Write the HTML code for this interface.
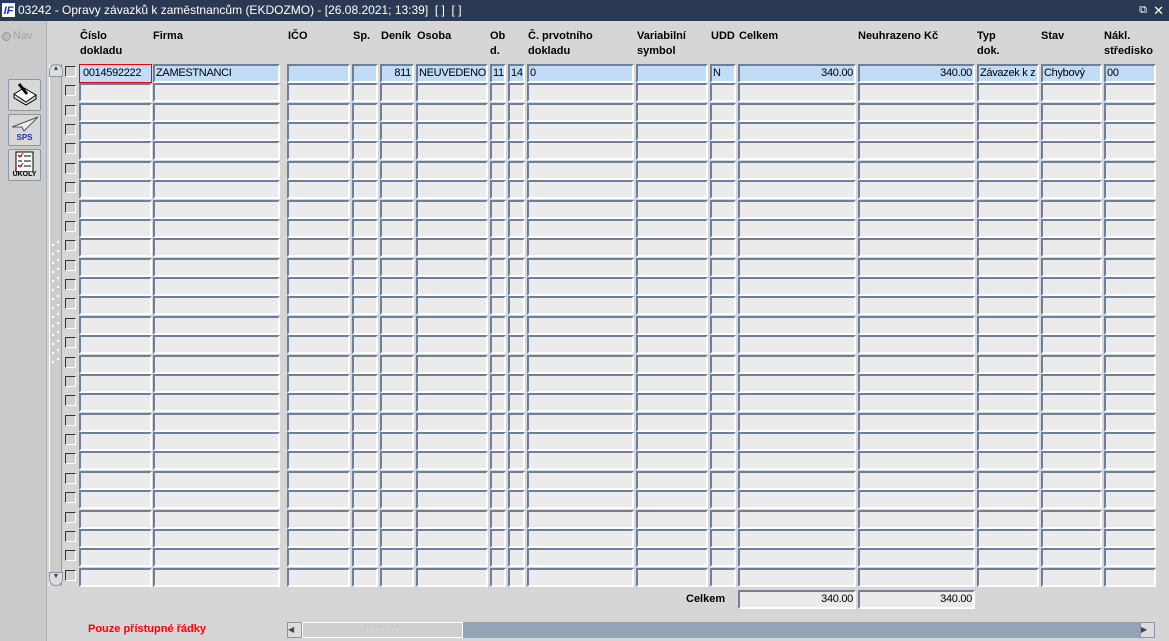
<!DOCTYPE html>
<html><head><meta charset="utf-8"><style>
*{box-sizing:border-box;margin:0;padding:0}
body{width:1169px;height:641px;overflow:hidden;background:#d6d6d6;font-family:"Liberation Sans",Arial,sans-serif;font-size:11px;position:relative}
#title{position:absolute;left:0;top:0;width:1169px;height:21px;background:#2b3a52;color:#fff;font-size:12px;line-height:21px}
#title .t{position:absolute;left:18px;top:0}
#logo{position:absolute;left:1px;top:2px;width:15px;height:16px;background:#fff;color:#1a2fb0;font-weight:bold;font-style:italic;font-size:11px;line-height:16px;text-align:center;border:1px solid #1a2fb0}
#left{position:absolute;left:0;top:21px;width:47px;height:620px;background:#cacaca;border-right:1px solid #a8b0bd}
.hd{position:absolute;top:29px;font-weight:bold;font-size:11px;line-height:15px;color:#000}
.c{position:absolute;height:19px;background:#ebebeb;border-top:2px solid #6e7f99;border-left:2px solid #6e7f99;border-bottom:2px solid #fff;border-right:2px solid #fff;font-size:11px;letter-spacing:-0.3px;line-height:15px;padding:0 1px;white-space:nowrap;overflow:hidden}
.s{background:#c0dcf6}
.r{text-align:right}
.cb{position:absolute;left:65px;width:11px;height:11px;border-top:1px solid #333;border-left:1px solid #333;border-bottom:1px solid #fff;border-right:1px solid #fff;background:#d0d0d0}
.btn{position:absolute;left:8px;width:33px;height:32px;background:#d8d8d8;border:1px solid #8a97aa;border-radius:2px;font-size:8px;font-weight:bold;text-align:center}
</style></head><body>
<div id="title"><div id="logo">IF</div><span class="t">03242 - Opravy závazků k zaměstnancům (EKDOZMO) - [26.08.2021; 13:39]&nbsp; [ ]&nbsp; [ ]</span><span style="position:absolute;right:22px;top:0;font-size:11px">&#10697;</span><span style="position:absolute;right:5px;top:0;font-size:13px">✕</span></div>
<div id="left">
<div style="position:absolute;left:2px;top:11px;width:9px;height:9px;border-radius:50%;background:#bbb;border:1px solid #999"></div>
<span style="position:absolute;left:13px;top:9px;color:#9aa0a8;font-size:11px">Nav</span>
<div class="btn" style="top:58px"><svg width="31" height="30"><path d="M5 14l10-6 12 7-10 7z" fill="#fff" stroke="#000"/><path d="M5 14l0 4 12 7 10-6v-4" fill="none" stroke="#000"/><path d="M10 4l8 10" stroke="#000" stroke-width="3"/></svg></div>
<div class="btn" style="top:93px"><svg width="31" height="20"><path d="M3 12l26-10-14 14-2-4z" fill="#eee" stroke="#555"/></svg><div style="color:#1b2fa8;margin-top:-4px">SPS</div></div>
<div class="btn" style="top:128px"><svg width="31" height="22"><rect x="7" y="2" width="17" height="20" fill="#fff" stroke="#000"/><path d="M9 6h4M9 11h4M9 16h4M15 6h7M15 11h7M15 16h7" stroke="#000"/><path d="M9 5l2 2 3-4M9 15l2 2 3-4" stroke="#d00" fill="none"/></svg><div style="margin-top:-3px;font-size:7px">ÚKOLY</div></div>
</div>
<div style="position:absolute;left:49px;top:64px;width:13px;height:522px;background:#cdcdcd;border-left:1px solid #fff;border-right:1px solid #999"></div>
<div style="position:absolute;left:49px;top:64px;width:14px;height:13px;border:1px solid #8a97aa;border-radius:7px 7px 0 0;background:#ddd;font-size:7px;text-align:center;color:#445">▲</div>
<div style="position:absolute;left:49px;top:572px;width:14px;height:14px;border:1px solid #8a97aa;border-radius:0 0 7px 7px;background:#ddd;font-size:7px;text-align:center;color:#445">▼</div>
<div class="hd" style="left:80px">Číslo<br>dokladu</div>
<div class="hd" style="left:153px">Firma</div>
<div class="hd" style="left:288px">IČO</div>
<div class="hd" style="left:353px">Sp.</div>
<div class="hd" style="left:381px">Deník</div>
<div class="hd" style="left:417px">Osoba</div>
<div class="hd" style="left:490px">Ob<br>d.</div>
<div class="hd" style="left:528px">Č. prvotního<br>dokladu</div>
<div class="hd" style="left:637px">Variabilní<br>symbol</div>
<div class="hd" style="left:711px">UDD</div>
<div class="hd" style="left:739px">Celkem</div>
<div class="hd" style="left:858px">Neuhrazeno Kč</div>
<div class="hd" style="left:977px">Typ<br>dok.</div>
<div class="hd" style="left:1041px">Stav</div>
<div class="hd" style="left:1104px">Nákl.<br>středisko</div>
<div id="grid"></div>
<div style="position:absolute;left:1157px;top:21px;width:12px;height:620px;background:#d6d6d6"></div>
<span style="position:absolute;left:686px;top:593px;font-weight:bold">Celkem</span>
<div class="c r" style="left:738px;top:590px;width:118px">340.00</div>
<div class="c r" style="left:858px;top:590px;width:117px">340.00</div>
<span style="position:absolute;left:88px;top:623px;color:#f00;font-weight:bold;font-size:11px">Pouze přístupné řádky</span>
<div style="position:absolute;left:287px;top:622px;width:868px;height:16px;background:#94a3b8"></div>
<div style="position:absolute;left:287px;top:622px;width:15px;height:16px;background:#ddd;border:1px solid #8a97aa;font-size:8px;line-height:14px;color:#445">◀</div>
<div style="position:absolute;left:302px;top:622px;width:161px;height:16px;background:#cfcfcf;border:1px solid #fff;text-align:center;color:#fff;font-size:8px;line-height:14px">· · · · · · ·</div>
<div style="position:absolute;left:1140px;top:622px;width:15px;height:16px;background:#ddd;border:1px solid #8a97aa;font-size:8px;line-height:14px;color:#445">▶</div>
<script>
var cols=[[79,73],[153,127],[287,63],[352,26],[380,34],[416,72],[490,16],[508,17],[527,107],[636,72],[710,26],[738,118],[858,117],[977,62],[1041,61],[1104,52]];
var first=["0014592222","ZAMESTNANCI","","","811","NEUVEDENO","11","14","0","","N","340.00","340.00","Závazek k z","Chybový","00"];
var right={4:1,11:1,12:1};
var h="";
for(var i=0;i<27;i++){var y=Math.round(64+i*19.37);
h+='<div class="cb" style="top:'+(y+2)+'px"></div>';
for(var j=0;j<cols.length;j++){var cls="c"+(i==0?" s":"")+(right[j]?" r":"");var st="left:"+cols[j][0]+"px;top:"+y+"px;width:"+cols[j][1]+"px;";
if(i==0&&j==0)st+="border:1px solid #e00;background:#c0dcf6;padding-left:3px;line-height:17px;";
h+='<div class="'+cls+'" style="'+st+'">'+(i==0?first[j]:"")+'</div>';}}
for(var k=0;k<14;k++){h+='<div style="position:absolute;left:52px;top:'+(244+k*9)+'px;width:2px;height:2px;background:#fff"></div><div style="position:absolute;left:57px;top:'+(241+k*9)+'px;width:2px;height:2px;background:#fff"></div>';}
document.getElementById("grid").innerHTML=h;
</script>
</body></html>
